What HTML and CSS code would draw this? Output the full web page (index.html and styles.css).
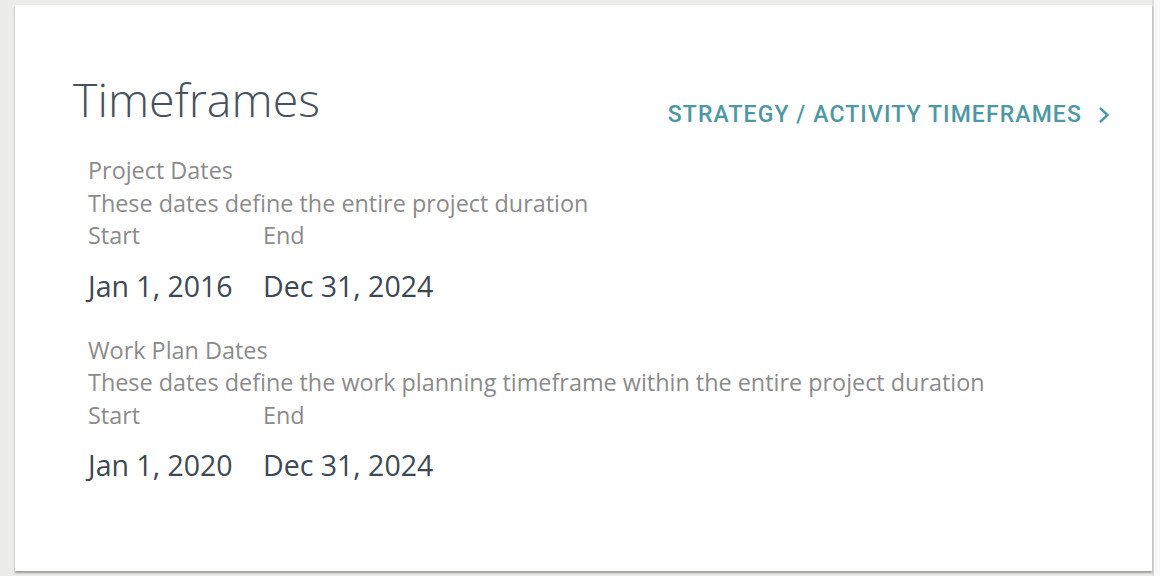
FILE: index.html
```html
<!DOCTYPE html>
<html>
<head>
<meta charset="utf-8">
<link rel="stylesheet" href="styles.css">
</head>
<body>
<div class="page">
  <div class="main">
    <div class="card">
      <div class="card-head">
        <h1 class="title">Timeframes</h1>
        <a class="link" href="#">STRATEGY / ACTIVITY TIMEFRAMES
          <svg class="chev" width="12" height="18" viewBox="0 0 12 18"><path d="M2 2 L9.5 9 L2 16" fill="none" stroke="#4d98a3" stroke-width="2.4"/></svg>
        </a>
      </div>
      <div class="sections">
        <div class="section">
          <div class="label">Project Dates</div>
          <div class="label">These dates define the entire project duration</div>
          <div class="dates">
            <div class="col"><div class="label">Start</div><div class="date">Jan 1, 2016</div></div>
            <div class="col"><div class="label">End</div><div class="date">Dec 31, 2024</div></div>
          </div>
        </div>
        <div class="section">
          <div class="label">Work Plan Dates</div>
          <div class="label">These dates define the work planning timeframe within the entire project duration</div>
          <div class="dates">
            <div class="col"><div class="label">Start</div><div class="date">Jan 1, 2020</div></div>
            <div class="col"><div class="label">End</div><div class="date">Dec 31, 2024</div></div>
          </div>
        </div>
      </div>
    </div>
  </div>
  <div class="gutter"></div>
</div>
</body>
</html>
```
FILE: styles.css
```css
html, body { margin: 0; padding: 0; }
body { width: 1160px; height: 576px; overflow: hidden; font-family: "Open Sans", sans-serif; }
.page { display: flex; height: 576px; }
.main { width: 1154px; background: #ecece8; padding: 5px 0 0 15px; box-sizing: border-box; border-right: 2px solid #dcdcdc; }
.gutter { flex: 1; background: #f8f8f8; }
.card { background: #fff; height: 566px; box-shadow: 0 2px 2px rgba(0,0,0,0.35); padding: 66px 42px 0 58px; box-sizing: border-box; }
.card-head { display: flex; justify-content: space-between; align-items: flex-start; }
.title { margin: 0; font-weight: 300; font-size: 46.6px; line-height: 56px; color: #47525c; }
.link { margin-top: 30px; font-family: Roboto, sans-serif; font-weight: 500; font-size: 23px; letter-spacing: 1.1px; color: #4d98a3; text-decoration: none; display: flex; align-items: center; gap: 16px; }
.chev { display: block; }
.sections { display: flex; flex-direction: column; gap: 28px; margin-top: 26px; padding-left: 15px; }
.label { font-size: 23.4px; line-height: 32.5px; color: #8b8b8b; }
.dates { display: flex; }
.col { width: 175px; }
.date { font-size: 28.5px; line-height: 40px; margin-top: 14px; color: #3e4852; }
```
